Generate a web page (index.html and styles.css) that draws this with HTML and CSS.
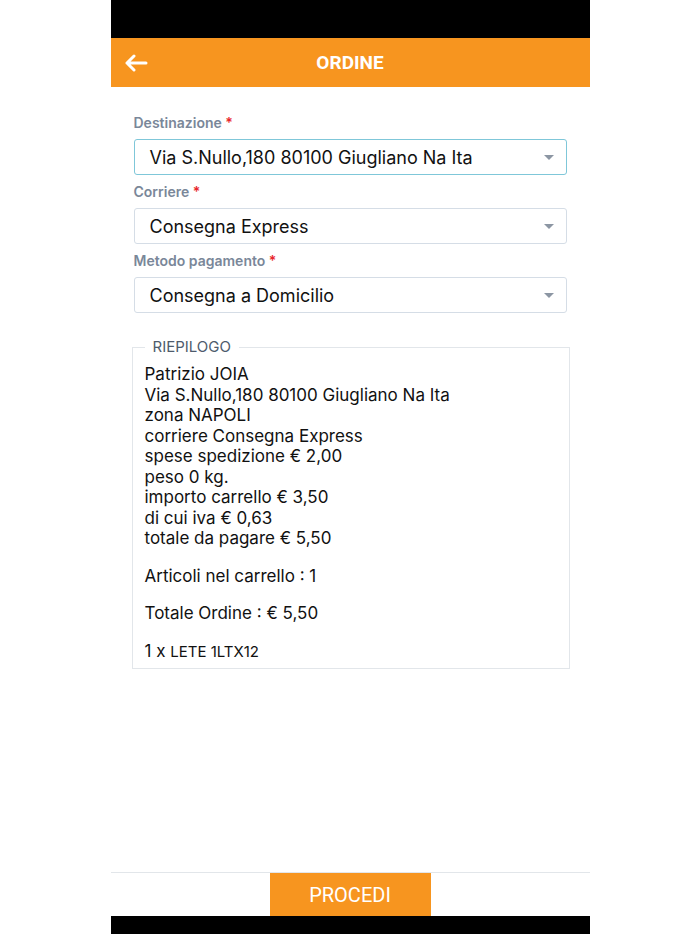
FILE: index.html
```html
<!DOCTYPE html>
<html lang="it">
<head>
<meta charset="utf-8">
<title>Ordine</title>
<link rel="stylesheet" href="styles.css">
</head>
<body>
<div class="app">
  <div class="statusbar"></div>
  <header class="header">
    <button class="back" aria-label="Indietro">
      <svg width="24" height="18" viewBox="0 0 24 18"><path d="M10 2 L3 9 L10 16 M3 9 H22" fill="none" stroke="#fff" stroke-width="3" stroke-linecap="round" stroke-linejoin="round"/></svg>
    </button>
    <h1 class="title">ORDINE</h1>
  </header>
  <main class="content">
    <div class="field">
      <label class="label">Destinazione <span class="req">*</span></label>
      <div class="select focused"><span>Via S.Nullo,180 80100 Giugliano Na Ita</span><i class="caret"></i></div>
    </div>
    <div class="field">
      <label class="label">Corriere <span class="req">*</span></label>
      <div class="select"><span>Consegna Express</span><i class="caret"></i></div>
    </div>
    <div class="field">
      <label class="label">Metodo pagamento <span class="req">*</span></label>
      <div class="select"><span>Consegna a Domicilio</span><i class="caret"></i></div>
    </div>
    <fieldset class="summary">
      <legend class="legend">RIEPILOGO</legend>
      <p class="lines">Patrizio JOIA<br>Via S.Nullo,180 80100 Giugliano Na Ita<br>zona NAPOLI<br>corriere Consegna Express<br>spese spedizione € 2,00<br>peso 0 kg.<br>importo carrello € 3,50<br>di cui iva € 0,63<br>totale da pagare € 5,50</p>
      <p class="para">Articoli nel carrello : 1</p>
      <p class="para">Totale Ordine : € 5,50</p>
      <p class="para">1 x <span class="small">LETE 1LTX12</span></p>
    </fieldset>
  </main>
  <footer class="footer">
    <button class="procedi">PROCEDI</button>
  </footer>
  <div class="homebar"></div>
</div>
</body>
</html>
```

FILE: styles.css
```css
html, body {
  margin: 0;
  padding: 0;
  background: #fff;
}
.app {
  width: 479px;
  height: 934px;
  margin: 0 auto;
  display: flex;
  flex-direction: column;
  background: #fff;
  font-family: Inter, "Noto Sans", sans-serif;
}
.statusbar {
  height: 38px;
  background: #000;
}
.header {
  height: 49px;
  background: #f7951f;
  display: flex;
  align-items: center;
  position: relative;
}
.back {
  background: none;
  border: 0;
  padding: 0;
  margin-left: 13px;
  width: 24px;
  height: 18px;
  display: flex;
}
.title {
  position: absolute;
  left: 0;
  right: 0;
  margin: 0;
  text-align: center;
  font-family: Roboto, sans-serif;
  font-weight: 700;
  font-size: 19px;
  color: #fff;
  pointer-events: none;
}
.content {
  flex: 1;
  padding: 27px 23px 0;
}
.field {
  display: flex;
  flex-direction: column;
  margin-bottom: 8px;
}
.label {
  font-size: 14px;
  font-weight: 600;
  color: #7a8799;
  line-height: 18px;
  margin-bottom: 7px;
}
.req {
  color: #e8262b;
}
.select {
  height: 34px;
  border: 1px solid #d5dde6;
  border-radius: 3px;
  display: flex;
  align-items: center;
  justify-content: space-between;
  padding: 0 12px 0 15px;
  font-size: 18px;
  color: #111;
}
.select.focused {
  border-color: #7fc7d9;
}
.caret {
  width: 0;
  height: 0;
  border-left: 5px solid transparent;
  border-right: 5px solid transparent;
  border-top: 5px solid #8c96a3;
}
.summary {
  margin: 25px -3px 0 -2px;
  padding: 0 12px 6px;
  border: 1px solid #e2e6ea;
  color: #111;
}
.legend {
  margin-left: 0;
  padding: 0 8px;
  font-size: 15px;
  color: #4e5b6c;
  line-height: 18px;
}
.lines {
  margin: 8px 0 0;
  font-size: 17px;
  line-height: 20.5px;
}
.para {
  margin: 17px 0 0;
  font-size: 17px;
  line-height: 20.5px;
}
.small {
  font-size: 15px;
}
.footer {
  border-top: 1px solid #e2e6ea;
  display: flex;
  justify-content: center;
}
.procedi {
  width: 161px;
  height: 43px;
  border: 0;
  background: #f7951f;
  color: #fff;
  font-family: Roboto, sans-serif;
  font-size: 20px;
  font-weight: 400;
  padding: 0;
}
.homebar {
  height: 18px;
  background: #000;
}
```
